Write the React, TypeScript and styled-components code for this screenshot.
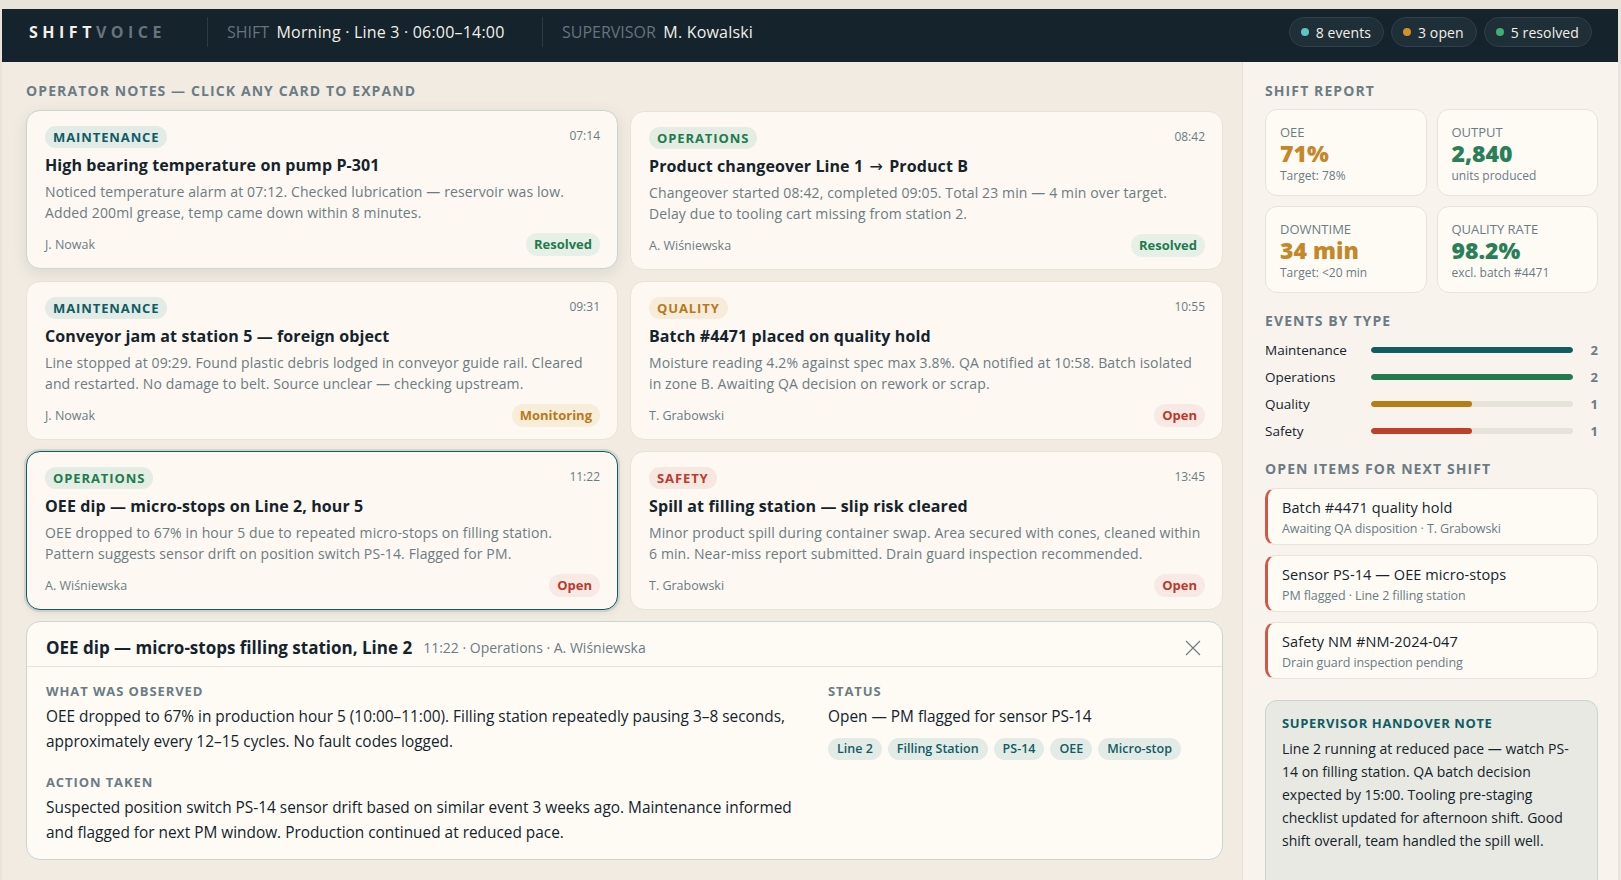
import type { ReactNode } from 'react';
import styled, { createGlobalStyle } from 'styled-components';

const colors = {
  teal: '#0f5c63',
  green: '#1f7a4d',
  amber: '#b7791f',
  red: '#b83b2c',
  ink: '#14232c',
  muted: '#6b7c85',
};

type Kind = 'maintenance' | 'operations' | 'quality' | 'safety';
type Status = 'Resolved' | 'Monitoring' | 'Open';

const kindStyle: Record<Kind, { fg: string; bg: string }> = {
  maintenance: { fg: colors.teal, bg: '#e3ebe7' },
  operations: { fg: colors.green, bg: '#e4ede3' },
  quality: { fg: colors.amber, bg: '#f6ecd9' },
  safety: { fg: colors.red, bg: '#f7e7e1' },
};

const statusStyle: Record<Status, { fg: string; bg: string }> = {
  Resolved: { fg: colors.green, bg: '#e6f0e6' },
  Monitoring: { fg: colors.amber, bg: '#f8edd8' },
  Open: { fg: colors.red, bg: '#f9e9e4' },
};

const Arrow = styled.span`
  margin: 0 2px;
  font-family: "DejaVu Sans", sans-serif;
  font-weight: 400;
  line-height: 0;
`;

const notes: {
  kind: Kind;
  time: string;
  title: ReactNode;
  body: string;
  author: string;
  status: Status;
  hovered?: boolean;
  selected?: boolean;
}[] = [
  {
    kind: 'maintenance',
    time: '07:14',
    title: 'High bearing temperature on pump P-301',
    body: 'Noticed temperature alarm at 07:12. Checked lubrication — reservoir was low. Added 200ml grease, temp came down within 8 minutes.',
    author: 'J. Nowak',
    status: 'Resolved',
    hovered: true,
  },
  {
    kind: 'operations',
    time: '08:42',
    title: (
      <>
        Product changeover Line 1 <Arrow>→</Arrow> Product B
      </>
    ),
    body: 'Changeover started 08:42, completed 09:05. Total 23 min — 4 min over target. Delay due to tooling cart missing from station 2.',
    author: 'A. Wiśniewska',
    status: 'Resolved',
  },
  {
    kind: 'maintenance',
    time: '09:31',
    title: 'Conveyor jam at station 5 — foreign object',
    body: 'Line stopped at 09:29. Found plastic debris lodged in conveyor guide rail. Cleared and restarted. No damage to belt. Source unclear — checking upstream.',
    author: 'J. Nowak',
    status: 'Monitoring',
  },
  {
    kind: 'quality',
    time: '10:55',
    title: 'Batch #4471 placed on quality hold',
    body: 'Moisture reading 4.2% against spec max 3.8%. QA notified at 10:58. Batch isolated in zone B. Awaiting QA decision on rework or scrap.',
    author: 'T. Grabowski',
    status: 'Open',
  },
  {
    kind: 'operations',
    time: '11:22',
    title: 'OEE dip — micro-stops on Line 2, hour 5',
    body: 'OEE dropped to 67% in hour 5 due to repeated micro-stops on filling station. Pattern suggests sensor drift on position switch PS-14. Flagged for PM.',
    author: 'A. Wiśniewska',
    status: 'Open',
    selected: true,
  },
  {
    kind: 'safety',
    time: '13:45',
    title: 'Spill at filling station — slip risk cleared',
    body: 'Minor product spill during container swap. Area secured with cones, cleaned within 6 min. Near-miss report submitted. Drain guard inspection recommended.',
    author: 'T. Grabowski',
    status: 'Open',
  },
];

const kpis = [
  { label: 'OEE', value: '71%', sub: 'Target: 78%', tone: '#c4872a' },
  { label: 'Output', value: '2,840', sub: 'units produced', tone: '#2a7f58' },
  { label: 'Downtime', value: '34 min', sub: 'Target: <20 min', tone: '#c4872a' },
  { label: 'Quality rate', value: '98.2%', sub: 'excl. batch #4471', tone: '#2a7f58' },
];

const bars = [
  { label: 'Maintenance', count: 2, color: colors.teal },
  { label: 'Operations', count: 2, color: '#25794f' },
  { label: 'Quality', count: 1, color: '#b57d14' },
  { label: 'Safety', count: 1, color: '#bd3f2c' },
];

const openItems = [
  { title: 'Batch #4471 quality hold', sub: 'Awaiting QA disposition · T. Grabowski' },
  { title: 'Sensor PS-14 — OEE micro-stops', sub: 'PM flagged · Line 2 filling station' },
  { title: 'Safety NM #NM-2024-047', sub: 'Drain guard inspection pending' },
];

const tags = ['Line 2', 'Filling Station', 'PS-14', 'OEE', 'Micro-stop'];

const App = () => (
  <>
    <GlobalStyle />
    <Page>
      <TopBar>
        <Logo>
          SHIFT<span>VOICE</span>
        </Logo>
        <TopDivider />
        <TopMeta>
          <small>SHIFT</small> Morning · Line 3 · 06:00–14:00
        </TopMeta>
        <TopDivider />
        <TopMeta>
          <small>SUPERVISOR</small> M. Kowalski
        </TopMeta>
        <Pills>
          <Pill $dot="#5fc4c0">8 events</Pill>
          <Pill $dot="#d0902c">3 open</Pill>
          <Pill $dot="#3fae74">5 resolved</Pill>
        </Pills>
      </TopBar>
      <Columns>
        <Main>
          <SectionLabel>Operator notes — click any card to expand</SectionLabel>
          <CardGrid>
            {notes.map((note) => (
              <NoteCard key={note.time} $hovered={note.hovered} $selected={note.selected}>
                <CardTop>
                  <KindTag $kind={note.kind}>{note.kind}</KindTag>
                  <Time>{note.time}</Time>
                </CardTop>
                <CardTitle>{note.title}</CardTitle>
                <CardBody>{note.body}</CardBody>
                <CardFoot>
                  <Author>{note.author}</Author>
                  <StatusTag $status={note.status}>{note.status}</StatusTag>
                </CardFoot>
              </NoteCard>
            ))}
          </CardGrid>
          <Detail>
            <DetailHead>
              <DetailTitle>OEE dip — micro-stops filling station, Line 2</DetailTitle>
              <DetailMeta>11:22 · Operations · A. Wiśniewska</DetailMeta>
              <CloseButton aria-label="Close">
                <svg width="16" height="16" viewBox="0 0 16 16" fill="none" stroke="currentColor" strokeWidth="1.2">
                  <path d="M1 1l14 14M15 1L1 15" />
                </svg>
              </CloseButton>
            </DetailHead>
            <DetailBody>
              <div>
                <FieldLabel>What was observed</FieldLabel>
                <FieldText>
                  OEE dropped to 67% in production hour 5 (10:00–11:00). Filling station repeatedly pausing 3–8 seconds,
                  approximately every 12–15 cycles. No fault codes logged.
                </FieldText>
                <FieldLabel>Action taken</FieldLabel>
                <FieldText>
                  Suspected position switch PS-14 sensor drift based on similar event 3 weeks ago. Maintenance informed
                  and flagged for next PM window. Production continued at reduced pace.
                </FieldText>
              </div>
              <div>
                <FieldLabel>Status</FieldLabel>
                <FieldText>Open — PM flagged for sensor PS-14</FieldText>
                <TagRow>
                  {tags.map((tag) => (
                    <Tag key={tag}>{tag}</Tag>
                  ))}
                </TagRow>
              </div>
            </DetailBody>
          </Detail>
        </Main>
        <Side>
          <SectionLabel>Shift report</SectionLabel>
          <KpiGrid>
            {kpis.map((kpi) => (
              <KpiCard key={kpi.label}>
                <KpiLabel>{kpi.label}</KpiLabel>
                <KpiValue $tone={kpi.tone}>{kpi.value}</KpiValue>
                <KpiSub>{kpi.sub}</KpiSub>
              </KpiCard>
            ))}
          </KpiGrid>
          <SideLabel>Events by type</SideLabel>
          <BarList>
            {bars.map((bar) => (
              <BarRow key={bar.label}>
                <span>{bar.label}</span>
                <BarTrack>
                  <BarFill $color={bar.color} style={{ width: `${bar.count * 50}%` }} />
                </BarTrack>
                <BarCount>{bar.count}</BarCount>
              </BarRow>
            ))}
          </BarList>
          <SideLabel>Open items for next shift</SideLabel>
          <ItemList>
            {openItems.map((item) => (
              <OpenItem key={item.title}>
                <ItemTitle>{item.title}</ItemTitle>
                <ItemSub>{item.sub}</ItemSub>
              </OpenItem>
            ))}
          </ItemList>
          <Handover>
            <HandoverTitle>Supervisor handover note</HandoverTitle>
            <HandoverText>
              Line 2 running at reduced pace — watch PS-14 on filling station. QA batch decision expected by 15:00.
              Tooling pre-staging checklist updated for afternoon shift. Good shift overall, team handled the spill
              well.
            </HandoverText>
          </Handover>
        </Side>
      </Columns>
    </Page>
  </>
);

const GlobalStyle = createGlobalStyle`
  html, body {
    margin: 0;
    height: 100%;
    overflow: hidden;
    background: #e9e4d9;
  }
  * {
    box-sizing: border-box;
  }
  body {
    font-family: "Open Sans", "Noto Sans", "Liberation Sans", sans-serif;
    color: ${colors.ink};
  }
`;

const Page = styled.div`
  margin: 9px 3px 0 2px;
  height: 871px;
  display: flex;
  flex-direction: column;
  overflow: hidden;
`;

const TopBar = styled.header`
  flex: none;
  height: 53px;
  display: flex;
  align-items: center;
  padding: 0 26px 7px 27px;
  background: ${colors.ink};
  color: #f3efe7;
`;

const Logo = styled.div`
  width: 178px;
  font-size: 16px;
  font-weight: 700;
  letter-spacing: 4.5px;
  span {
    color: #66747b;
  }
`;

const TopDivider = styled.i`
  width: 1px;
  height: 30px;
  margin-right: 19px;
  background: #2c3c45;
`;

const TopMeta = styled.div`
  width: 315px;
  font-size: 16px;
  font-weight: 500;
  letter-spacing: 0.2px;
  white-space: nowrap;
  small {
    font-size: 16px;
    font-weight: 400;
    letter-spacing: 0;
    color: #66747b;
    margin-right: 3px;
  }
`;

const Pills = styled.div`
  margin-left: auto;
  display: flex;
  gap: 7px;
`;

const Pill = styled.div<{ $dot: string }>`
  height: 30px;
  padding: 0 12px 0 11px;
  display: flex;
  align-items: center;
  gap: 7px;
  border: 1px solid #2f4049;
  border-radius: 15px;
  background: #1f2f38;
  font-size: 14px;
  font-weight: 500;
  letter-spacing: 0.1px;
  &::before {
    content: '';
    width: 8px;
    height: 8px;
    border-radius: 50%;
    background: ${(p) => p.$dot};
  }
`;

const Columns = styled.div`
  flex: 1;
  min-height: 0;
  display: flex;
`;

const Main = styled.main`
  flex: 1;
  min-width: 0;
  padding: 19px 19px 0 24px;
  background: #f1ebe1;
`;

const SectionLabel = styled.h2`
  margin: 0;
  height: 20px;
  line-height: 20px;
  font-size: 14px;
  font-weight: 700;
  letter-spacing: 1.1px;
  text-transform: uppercase;
  color: ${colors.muted};
`;

const CardGrid = styled.div`
  margin-top: 10px;
  display: grid;
  grid-template-columns: 592px 1fr;
  gap: 11px 12px;
`;

const NoteCard = styled.article<{ $hovered?: boolean; $selected?: boolean }>`
  height: 159px;
  padding: 15px 17px 0 18px;
  background: #fdf8f1;
  border: 1px solid ${(p) => (p.$selected ? colors.teal : p.$hovered ? '#c9d5d1' : '#e8e3d9')};
  border-radius: 14px;
  display: flex;
  flex-direction: column;
  ${(p) => p.$hovered && 'transform: translateY(-1px); box-shadow: 0 4px 16px rgba(20, 35, 44, 0.09);'}
  ${(p) => p.$selected && 'box-shadow: 0 0 0 2px rgba(15, 92, 99, 0.12), 0 2px 8px rgba(20, 35, 44, 0.08);'}
`;

const CardTop = styled.div`
  display: flex;
  justify-content: space-between;
  align-items: flex-start;
`;

const KindTag = styled.span<{ $kind: Kind }>`
  height: 22px;
  line-height: 22px;
  padding: 0 8px;
  border-radius: 11px;
  font-size: 13px;
  font-weight: 700;
  letter-spacing: 0.9px;
  text-transform: uppercase;
  color: ${(p) => kindStyle[p.$kind].fg};
  background: ${(p) => kindStyle[p.$kind].bg};
`;

const Time = styled.span`
  padding-top: 1px;
  font-size: 12px;
  color: ${colors.muted};
`;

const CardTitle = styled.h3`
  margin: 6px 0 0;
  line-height: 22px;
  font-size: 16px;
  font-weight: 700;
  letter-spacing: 0.1px;
`;

const CardBody = styled.p`
  margin: 5px 0 0;
  line-height: 21px;
  font-size: 14px;
  letter-spacing: 0.12px;
  color: ${colors.muted};
`;

const CardFoot = styled.div`
  margin-top: auto;
  margin-bottom: 12px;
  display: flex;
  justify-content: space-between;
  align-items: center;
`;

const Author = styled.span`
  font-size: 12.5px;
  color: ${colors.muted};
`;

const StatusTag = styled.span<{ $status: Status }>`
  height: 23px;
  line-height: 23px;
  padding: 0 8px;
  border-radius: 12px;
  font-size: 13px;
  font-weight: 700;
  color: ${(p) => statusStyle[p.$status].fg};
  background: ${(p) => statusStyle[p.$status].bg};
`;

const Detail = styled.section`
  margin-top: 11px;
  height: 239px;
  background: #fefbf5;
  border: 1px solid #c9d5d1;
  border-radius: 14px;
`;

const DetailHead = styled.div`
  height: 45px;
  padding: 7px 21px 0 19px;
  display: flex;
  align-items: center;
  gap: 11px;
  border-bottom: 1px solid #e8e3d9;
`;

const DetailTitle = styled.h3`
  margin: 0;
  font-size: 17px;
  font-weight: 700;
`;

const DetailMeta = styled.span`
  font-size: 14px;
  color: ${colors.muted};
`;

const CloseButton = styled.button`
  margin-left: auto;
  padding: 0;
  display: flex;
  border: 0;
  background: none;
  color: ${colors.muted};
`;

const DetailBody = styled.div`
  padding: 14px 19px 0;
  display: grid;
  grid-template-columns: 754px 1fr;
  gap: 28px;
`;

const FieldLabel = styled.h4`
  margin: 0;
  height: 20px;
  line-height: 20px;
  font-size: 13px;
  font-weight: 700;
  letter-spacing: 0.9px;
  text-transform: uppercase;
  color: ${colors.muted};
`;

const FieldText = styled.p`
  margin: 3px 0 18px;
  line-height: 25px;
  font-size: 15.4px;
`;

const TagRow = styled.div`
  margin-top: -9px;
  display: flex;
  gap: 6px;
`;

const Tag = styled.span`
  height: 22px;
  line-height: 22px;
  padding: 0 9px;
  border-radius: 11px;
  background: #e3ebe7;
  color: ${colors.teal};
  font-size: 12.5px;
  font-weight: 600;
`;

const Side = styled.aside`
  flex: none;
  width: 376px;
  padding: 19px 20px 0 22px;
  background: #f8f3ed;
  border-left: 1px solid #e6e1d7;
`;

const KpiGrid = styled.div`
  margin-top: 8px;
  display: grid;
  grid-template-columns: 1fr 1fr;
  gap: 10px;
`;

const KpiCard = styled.div`
  height: 87px;
  padding: 14px 14px 0;
  background: #fefbf5;
  border: 1px solid #e8e3d9;
  border-radius: 12px;
`;

const KpiLabel = styled.div`
  line-height: 16px;
  font-size: 13px;
  text-transform: uppercase;
  color: ${colors.muted};
`;

const KpiValue = styled.div<{ $tone: string }>`
  line-height: 26px;
  font-size: 23px;
  font-weight: 800;
  color: ${(p) => p.$tone};
`;

const KpiSub = styled.div`
  margin-top: 2px;
  line-height: 16px;
  font-size: 12px;
  color: ${colors.muted};
`;

const SideLabel = styled(SectionLabel)`
  margin-top: 18px;
`;

const BarList = styled.div`
  margin: 5px 0 -3px;
`;

const BarRow = styled.div`
  height: 27px;
  display: flex;
  align-items: center;
  font-size: 13.5px;
  span:first-child {
    width: 106px;
  }
`;

const BarTrack = styled.div`
  width: 202px;
  height: 6px;
  border-radius: 3px;
  background: #e6e3db;
  overflow: hidden;
`;

const BarFill = styled.div<{ $color: string }>`
  height: 100%;
  border-radius: 3px;
  background: ${(p) => p.$color};
`;

const BarCount = styled.span`
  margin-left: auto;
  font-size: 13px;
  font-weight: 700;
  color: ${colors.muted};
`;

const ItemList = styled.div`
  margin-top: 9px;
  display: flex;
  flex-direction: column;
  gap: 10px;
`;

const OpenItem = styled.div`
  height: 57px;
  padding: 9px 14px 0;
  background: #fefbf5;
  border: 1px solid #e8e3d9;
  border-left: 3px solid #d0574a;
  border-radius: 10px;
`;

const ItemTitle = styled.div`
  line-height: 20px;
  font-size: 14.5px;
  font-weight: 500;
  letter-spacing: 0.1px;
`;

const ItemSub = styled.div`
  margin-top: 2px;
  line-height: 18px;
  font-size: 12.5px;
  letter-spacing: -0.1px;
  color: ${colors.muted};
`;

const Handover = styled.div`
  margin-top: 21px;
  height: 260px;
  padding: 13px 16px;
  background: #e7e9e2;
  border: 1px solid #c9d5d1;
  border-radius: 12px;
`;

const HandoverTitle = styled.div`
  line-height: 18px;
  font-size: 13px;
  font-weight: 700;
  letter-spacing: 0.6px;
  text-transform: uppercase;
  color: ${colors.teal};
`;

const HandoverText = styled.p`
  margin: 5px 0 0;
  line-height: 23px;
  font-size: 14px;
`;

export default App;
